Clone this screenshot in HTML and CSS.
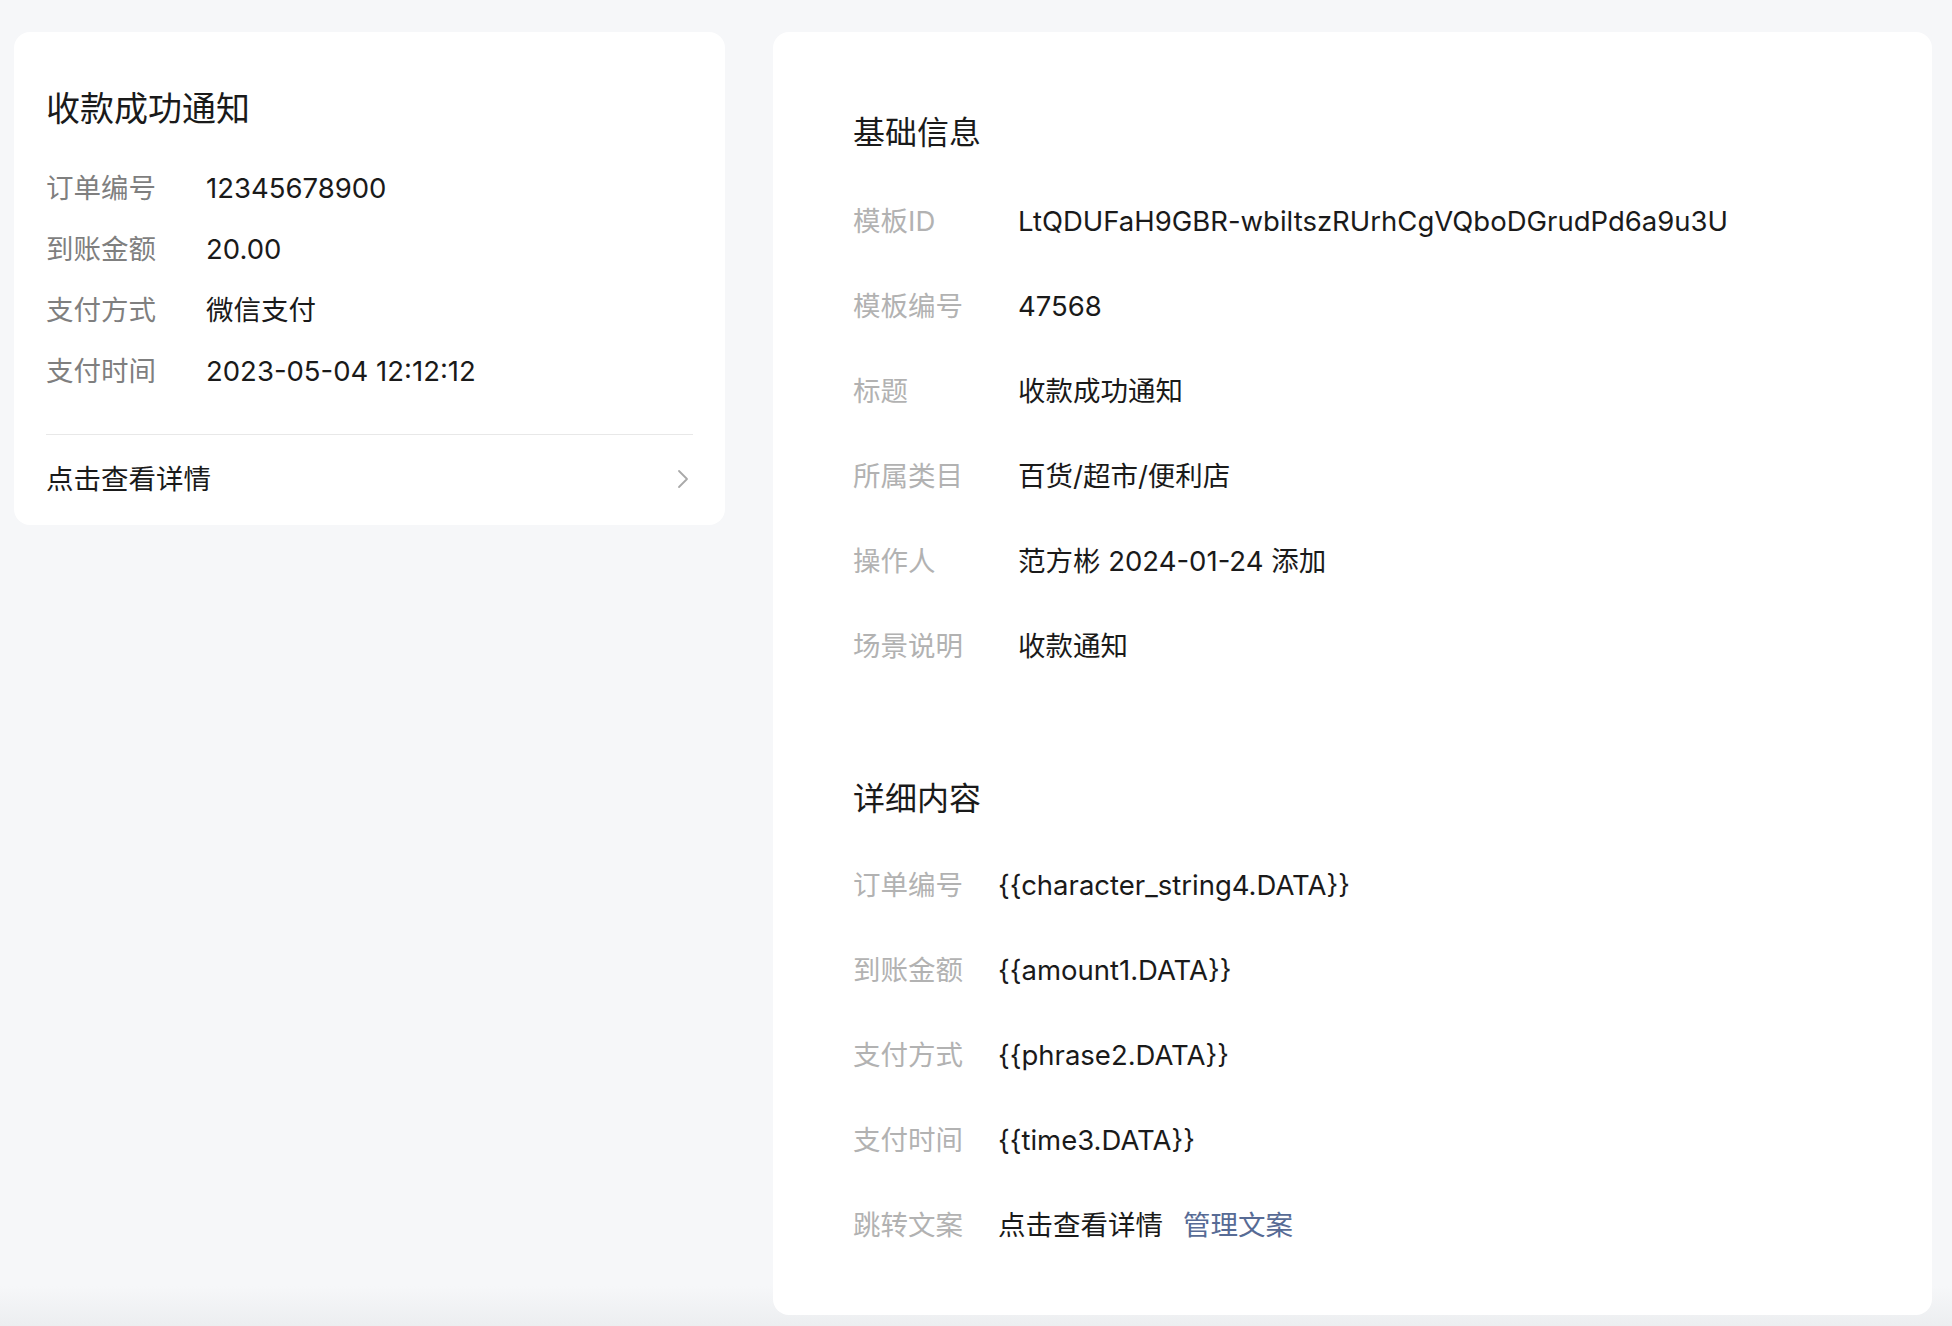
FILE: index.html
```html
<!DOCTYPE html>
<html lang="zh-CN">
<head>
    <meta charset="UTF-8">
    <meta name="viewport" content="width=device-width, initial-scale=1.0">
    <title>模板详情</title>
    <link rel="stylesheet" href="styles.css">
</head>
<body>
    <div class="page">
        <!-- 消息预览 -->
        <div class="card preview">
            <div class="preview-title">收款成功通知</div>
            <div class="preview-row"><span class="preview-label">订单编号</span><span class="value">12345678900</span></div>
            <div class="preview-row"><span class="preview-label">到账金额</span><span class="value">20.00</span></div>
            <div class="preview-row"><span class="preview-label">支付方式</span><span class="value">微信支付</span></div>
            <div class="preview-row"><span class="preview-label">支付时间</span><span class="value">2023-05-04 12:12:12</span></div>
            <div class="preview-footer">
                <span>点击查看详情</span>
                <svg class="arrow" width="12" height="20" viewBox="0 0 12 20"><path d="M2 2l8 8-8 8" fill="none" stroke="#a9a9a9" stroke-width="1.8" stroke-linecap="round" stroke-linejoin="round"/></svg>
            </div>
        </div>

        <!-- 模板信息 -->
        <div class="card detail">
            <div class="section">
                <h2>基础信息</h2>
                <div class="info-row"><span class="label">模板ID</span><span class="value">LtQDUFaH9GBR-wbiltszRUrhCgVQboDGrudPd6a9u3U</span></div>
                <div class="info-row"><span class="label">模板编号</span><span class="value">47568</span></div>
                <div class="info-row"><span class="label">标题</span><span class="value">收款成功通知</span></div>
                <div class="info-row"><span class="label">所属类目</span><span class="value">百货/超市/便利店</span></div>
                <div class="info-row"><span class="label">操作人</span><span class="value">范方彬 2024-01-24 添加</span></div>
                <div class="info-row"><span class="label">场景说明</span><span class="value">收款通知</span></div>
            </div>
            <div class="section narrow">
                <h2>详细内容</h2>
                <div class="info-row"><span class="label">订单编号</span><span class="value">{{character_string4.DATA}}</span></div>
                <div class="info-row"><span class="label">到账金额</span><span class="value">{{amount1.DATA}}</span></div>
                <div class="info-row"><span class="label">支付方式</span><span class="value">{{phrase2.DATA}}</span></div>
                <div class="info-row"><span class="label">支付时间</span><span class="value">{{time3.DATA}}</span></div>
                <div class="info-row"><span class="label">跳转文案</span><span class="value">点击查看详情</span><a class="link" href="#">管理文案</a></div>
            </div>
        </div>
    </div>
</body>
</html>
```

FILE: styles.css
```css
body {
    margin: 0;
    min-height: 100vh;
    font-family: Inter, "Noto Sans CJK SC", sans-serif;
    color: #1a1a1a;
    background: linear-gradient(#f6f7f9 97%, #eceef0);
}
.page {
    display: flex;
    align-items: flex-start;
    gap: 48px;
    padding: 32px 20px 0 14px;
}
.card {
    background-color: #fff;
    border-radius: 16px;
    box-sizing: border-box;
}
.value {
    color: #1a1a1a;
}

/* left preview card */
.preview {
    width: 711px;
    padding: 54px 32px 0;
}
.preview-title {
    font-size: 34px;
    line-height: 46px;
    margin-bottom: 36px;
}
.preview-row {
    display: flex;
    font-size: 27.5px;
    line-height: 40px;
    margin-bottom: 21px;
}
.preview-label {
    width: 160px;
    flex-shrink: 0;
    color: #7f7f7f;
}
.preview-footer {
    display: flex;
    justify-content: space-between;
    align-items: center;
    margin-top: 43px;
    border-top: 1px solid #e8e8e8;
    padding: 24px 4px 26px 0;
    font-size: 27.5px;
    line-height: 40px;
}

/* right detail card */
.detail {
    flex: 1;
    height: 1283px;
    padding: 79px 80px 0;
}
.section {
    margin-bottom: 111px;
}
.section h2 {
    margin: 0 0 46px;
    font-size: 32px;
    line-height: 44px;
    font-weight: 400;
}
.narrow h2 {
    margin-bottom: 44px;
}
.info-row {
    display: flex;
    font-size: 27.5px;
    line-height: 40px;
    margin-bottom: 45px;
}
.section .info-row:last-child {
    margin-bottom: 0;
}
.label {
    width: 165px;
    flex-shrink: 0;
    color: #b2b2b2;
}
.narrow .label {
    width: 145px;
}
.link {
    margin-left: 20px;
    color: #576b95;
    text-decoration: none;
}
```
